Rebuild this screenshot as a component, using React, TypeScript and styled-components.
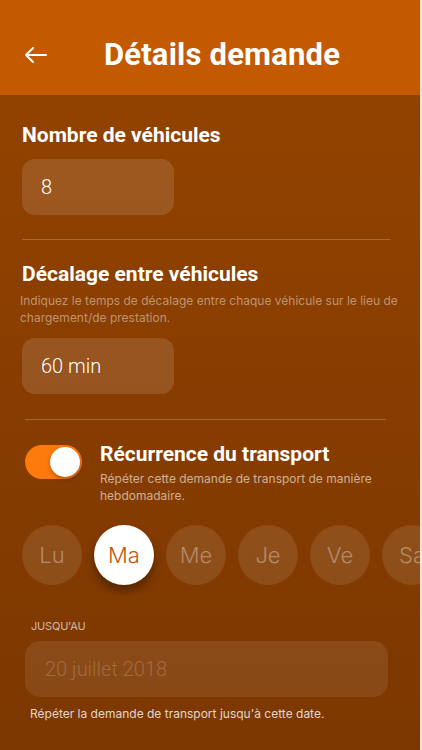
import React from "react";
import styled, { createGlobalStyle } from "styled-components";

const Global = createGlobalStyle`
  html, body { margin: 0; padding: 0; background: #efe3d3; }
  body { width: 422px; height: 750px; overflow: hidden; }
  #root { width: 420px; }
`;

const Screen = styled.div`
  width: 420px;
  height: 750px;
  display: flex;
  flex-direction: column;
  background: linear-gradient(180deg, #954400 0%, #7c3700 100%);
  font-family: Roboto, "Noto Sans", sans-serif;
  color: #fff;
`;

const Header = styled.header`
  height: 95px;
  flex: none;
  background: #c45a00;
  display: grid;
  grid-template-columns: 94px 1fr 70px;
  align-items: center;
  padding-top: 14px;
  box-sizing: border-box;
`;

const BackBtn = styled.div`
  display: flex;
  justify-content: flex-start;
  padding-left: 24px;
`;

const Title = styled.h1`
  margin: 0;
  text-align: center;
  white-space: nowrap;
  font-size: 31px;
  font-weight: 700;
  letter-spacing: 0.2px;
`;

const Body = styled.main`
  flex: 1;
  display: flex;
  flex-direction: column;
  padding: 0 30px 0 22px;
  overflow: visible;
`;

const Label = styled.h2`
  margin: 0;
  font-size: 21px;
  font-weight: 700;
  line-height: 24px;
`;

const Hint = styled.p<{ $tone?: number }>`
  margin: 0;
  font-family: Inter, "Liberation Sans", sans-serif;
  font-size: 12px;
  line-height: 17px;
  color: rgba(255, 255, 255, ${(p) => p.$tone ?? 0.45});
`;

const Field = styled.div<{ $wide?: boolean; $muted?: boolean }>`
  width: ${(p) => (p.$wide ? "363px" : "152px")};
  height: 56px;
  border-radius: ${(p) => (p.$wide ? "15px" : "13px")};
  background: rgba(255, 255, 255, ${(p) => (p.$wide ? 0.09 : 0.12)});
  display: flex;
  align-items: center;
  padding-left: ${(p) => (p.$wide ? "20px" : "19px")};
  box-sizing: border-box;
  font-size: 20px;
  font-weight: 300;
  color: ${(p) => (p.$muted ? "rgba(255,255,255,0.2)" : "#fff")};
`;

const Divider = styled.hr<{ $inset?: number }>`
  border: none;
  height: 1px;
  background: rgba(255, 255, 255, 0.22);
  margin: 0 ${(p) => p.$inset ?? 0}px 0 ${(p) => p.$inset ?? 0}px;
`;

const Section = styled.section<{ $top: number; $bottom: number }>`
  display: flex;
  flex-direction: column;
  padding-top: ${(p) => p.$top}px;
  padding-bottom: ${(p) => p.$bottom}px;
`;

const ToggleRow = styled.div`
  display: flex;
  gap: 18px;
  padding: 22px 0 0 3px;
`;

const Toggle = styled.div`
  width: 57px;
  height: 34px;
  flex: none;
  border-radius: 17px;
  background: #ff7a0c;
  display: flex;
  align-items: center;
  justify-content: flex-end;
  padding: 2px;
  box-sizing: border-box;
  margin-top: 3px;
`;

const Knob = styled.div`
  width: 30px;
  height: 30px;
  border-radius: 50%;
  background: #fff;
  box-shadow: 0 2px 4px rgba(0, 0, 0, 0.3);
`;

const ToggleText = styled.div`
  display: flex;
  flex-direction: column;
  gap: 4px;
`;

const Days = styled.div`
  display: flex;
  gap: 12px;
  margin-top: 21px;
  margin-right: -60px;
  overflow: hidden;
  padding-bottom: 10px;
  margin-bottom: -10px;
`;

const Day = styled.div<{ $on?: boolean }>`
  width: 60px;
  height: 60px;
  flex: none;
  border-radius: 50%;
  display: flex;
  align-items: center;
  justify-content: center;
  font-family: Inter, "Liberation Sans", sans-serif;
  font-size: 22px;
  font-weight: 300;
  background: ${(p) => (p.$on ? "#fff" : "rgba(255,255,255,0.1)")};
  color: ${(p) => (p.$on ? "#c4580a" : "rgba(255,255,255,0.35)")};
  box-shadow: ${(p) => (p.$on ? "0 6px 10px rgba(0,0,0,0.35)" : "none")};
`;

const Caps = styled.div`
  font-family: Inter, "Liberation Sans", sans-serif;
  font-size: 11px;
  color: rgba(255, 255, 255, 0.65);
  margin: 34px 0 8px 6px;
  letter-spacing: -0.2px;
`;

const Until = styled.div`
  padding-left: 3px;
  display: flex;
  flex-direction: column;
`;

const days = ["Lu", "Ma", "Me", "Je", "Ve", "Sa"];

export default function App() {
  return (
    <>
      <Global />
      <Screen>
        <Header>
          <BackBtn>
            <svg width="24" height="18" viewBox="0 0 24 18" fill="none" stroke="#fff" strokeWidth="2" strokeLinecap="round" strokeLinejoin="round">
              <path d="M22 9H2M9 2L2 9l7 7" />
            </svg>
          </BackBtn>
          <Title>Détails demande</Title>
          <div />
        </Header>
        <Body>
          <Section $top={28} $bottom={24}>
            <Label>Nombre de véhicules</Label>
            <div style={{ height: 12 }} />
            <Field>8</Field>
          </Section>
          <Divider />
          <Section $top={22} $bottom={25}>
            <Label>Décalage entre véhicules</Label>
            <Hint style={{ marginTop: 6, marginLeft: -2, marginRight: -10 }}>
              Indiquez le temps de décalage entre chaque véhicule sur le lieu de chargement/de prestation.
            </Hint>
            <div style={{ height: 12 }} />
            <Field>60 min</Field>
          </Section>
          <Divider $inset={3} style={{ marginRight: 4 }} />
          <ToggleRow>
            <Toggle>
              <Knob />
            </Toggle>
            <ToggleText>
              <Label>Récurrence du transport</Label>
              <Hint $tone={0.6}>Répéter cette demande de transport de manière hebdomadaire.</Hint>
            </ToggleText>
          </ToggleRow>
          <Days>
            {days.map((d) => (
              <Day key={d} $on={d === "Ma"}>
                {d}
              </Day>
            ))}
          </Days>
          <Until>
            <Caps>JUSQU'AU</Caps>
            <Field $wide $muted>20 juillet 2018</Field>
            <Hint $tone={0.8} style={{ margin: "8px 0 0 5px" }}>
              Répéter la demande de transport jusqu'à cette date.
            </Hint>
          </Until>
        </Body>
      </Screen>
    </>
  );
}
